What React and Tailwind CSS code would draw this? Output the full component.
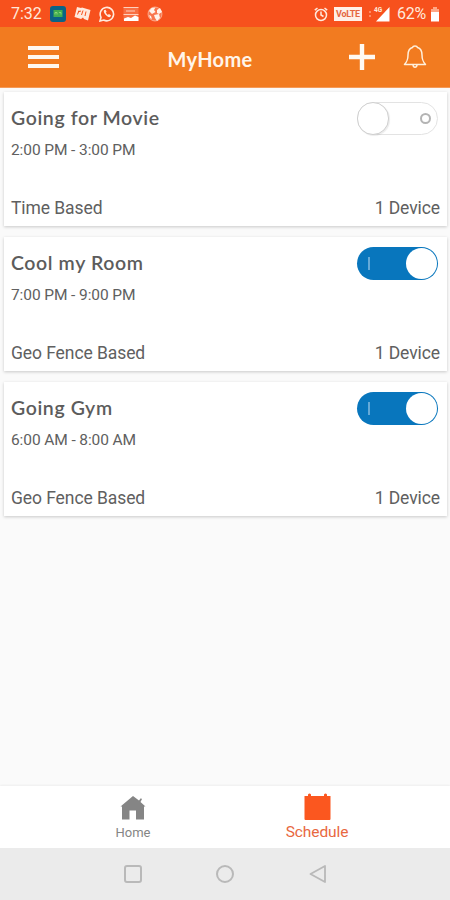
import React from "react";

const schedules = [
  { title: "Going for Movie", time: "2:00 PM - 3:00 PM", type: "Time Based", devices: "1 Device", on: false },
  { title: "Cool my Room", time: "7:00 PM - 9:00 PM", type: "Geo Fence Based", devices: "1 Device", on: true },
  { title: "Going Gym", time: "6:00 AM - 8:00 AM", type: "Geo Fence Based", devices: "1 Device", on: true },
];

export default function App() {
  return (
    <div className="w-[450px] h-[900px] flex flex-col overflow-hidden bg-[#fafafa] font-['Roboto',sans-serif] text-[#606060]">
      <StatusBar />
      <Header />

      {/* Schedule list */}
      <main className="flex-1 flex flex-col gap-[11px] pt-[4px] pl-1 pr-[3px]">
        {schedules.map((item) => (
          <ScheduleCard key={item.title} {...item} />
        ))}
      </main>

      <TabBar />
      <SystemNav />
    </div>
  );
}

// ——————————————————————————
// Android status bar
// ——————————————————————————
function StatusBar() {
  return (
    <div className="h-[27px] shrink-0 flex items-center pl-[11px] pr-[10px] pt-px bg-[#f7511d] text-[#ffe9dc]">
      <span className="w-[39px] text-[16px] leading-none">7:32</span>
      <div className="flex gap-2">
        <svg className="w-4 h-4" viewBox="0 0 16 16">
          <rect width="16" height="16" rx="3" fill="#0c6385" />
          <rect x="3.5" y="4" width="9" height="7" fill="#43ad50" />
          <path d="M5 8.500V6.500h2v2M9 6.500h2v2" fill="none" stroke="#9be07c" strokeWidth=".8" />
        </svg>
        <svg className="w-[17px] h-4" viewBox="0 0 17 16">
          <path d="m3 1 4 1 1-.5 8.500 2.500L14 14.500l-4-1.500-1-1.500-2 1.500L.500 11z" fill="#ffe9dc" />
          <path d="m5 4.500-1.500 4M9 4.500 7.500 9M12 5.500 11 10M4 6l3-1" fill="none" stroke="#f7511d" strokeWidth="1" />
        </svg>
        <svg className="w-4 h-4" viewBox="0 0 16 16" fill="none" stroke="#ffe9dc" strokeWidth="1.600">
          <path d="m1 15 1-3.700A6.700 6.700 0 1 1 4.700 14z" />
          <path d="M5.200 4c-2 2 3.300 8.200 6 7l.8-1.800-2.100-1.100-1.100.9-2-2.200.8-1.100-1-2z" fill="#ffe9dc" stroke="none" />
        </svg>
        <svg className="w-4 h-4" viewBox="0 0 16 16">
          <rect x=".5" y="1" width="15" height="14" rx="1" fill="#ffe9dc" fillOpacity=".2" />
          <path d="M.5 1.500h15M.5 8.500h15M3 5h9" stroke="#ffe9dc" strokeOpacity=".8" strokeWidth="1.200" />
          <path d="M1 15v-2.500l4-1.500 3 1L12 9.500l3.500 1.500V15z" fill="#fff" />
        </svg>
        <svg className="w-4 h-4" viewBox="0 0 16 16">
          <circle cx="8" cy="8" r="7" fill="#ffe9dc" fillOpacity=".25" stroke="#ffe9dc" strokeOpacity=".5" />
          <path d="m2 5 2.500-3 4-.5L7 4l1.500 2L5 8zM10 4l3-2 2 4-3 2-2-1zM7 9l5-1 1 4-3 3-2-3zM2 9l2 1 1 3-2-1z" fill="#fff3ea" />
        </svg>
      </div>

      <div className="ml-auto flex items-center">
        <svg className="w-[14px] h-[15px]" viewBox="0 0 14 15" fill="none" stroke="#ffe9dc" strokeWidth="1.500">
          <circle cx="7" cy="8" r="5.500" />
          <path d="M7 4.500V8l2.500 1.500M.8 3.200 3.500 1M13.200 3.200 10.500 1" />
        </svg>
        <span className="ml-[6px] mr-px w-[28px] h-[14px] bg-[#fff0e8] text-[#e5673f] text-[9px] leading-[14px] font-bold text-center tracking-[-0.3px]">
          VoLTE
        </span>
        <svg className="ml-[5px] mr-px w-[22px] h-[16px]" viewBox="0 0 22 16">
          <path d="M21.500 1v14.500H8z" fill="#fff" />
          <path d="M2 5v2m0 2v2" stroke="#ff8a63" strokeWidth="2" />
          <text x="6" y="6" fontSize="6.500" fontWeight="700" fill="#ffe9dc">4G</text>
        </svg>
        <span className="ml-[6px] w-[31px] text-[16px] leading-none tracking-[-0.3px]">62%</span>
        <svg className="ml-[2px] w-[10px] h-[15px]" viewBox="0 0 10 15">
          <path d="M3 0h4v2h2v4H1V2h2z" fill="#ffa685" />
          <path d="M1 5h8v9.500H1z" fill="#fff" />
        </svg>
      </div>
    </div>
  );
}

// ——————————————————————————
// App header
// ——————————————————————————
function Header() {
  return (
    <header className="h-[61px] shrink-0 grid grid-cols-[1fr_auto_1fr] items-center bg-[#f27b20] border-b border-[#f59a58] text-white">
      <div className="ml-7 flex flex-col gap-[5px]">
        <span className="w-[31px] h-1 bg-[#fff8ef]" />
        <span className="w-[31px] h-1 bg-[#fff8ef]" />
        <span className="w-[31px] h-1 bg-[#fff8ef]" />
      </div>
      <h1 className="ml-[-30px] pt-[4px] font-['Lato',sans-serif] font-bold text-[20px] leading-6 tracking-[0.3px] text-[#fff5ea]">
        MyHome
      </h1>
      <div className="flex items-center justify-end pr-[23px] gap-[28px]">
        <svg className="w-[26px] h-[26px]" viewBox="0 0 26 26" stroke="#fffaf3" strokeWidth="4.400">
          <path d="M13 0v26M0 13h26" />
        </svg>
        <svg className="w-6 h-6" viewBox="0 0 24 24" fill="none" stroke="#fff0dc" strokeWidth="1.500" strokeLinejoin="round">
          <path d="M9.500 2.500c.5-2 4.500-2 5 0 3.500 1 4.500 4 4.500 7.500 0 5 1 6.500 3.500 9.500h-21C4 16.500 5 15 5 10c0-3.500 1-6.500 4.500-7.500zM10 19.500c0 3.500 4 3.500 4 0" />
        </svg>
      </div>
    </header>
  );
}

// ——————————————————————————
// Schedule card
// ——————————————————————————
function ScheduleCard({ title, time, type, devices, on }) {
  return (
    <section className="h-[134px] pl-[7px] pr-[7px] flex flex-col bg-white shadow-[0_1px_3px_rgba(0,0,0,0.2)]">
      <div className="flex justify-between">
        <div className="pt-[14px]">
          <h2 className="font-['Lato',sans-serif] font-semibold text-[19.5px] leading-6 tracking-[0.6px] text-[#5c5c5c]">
            {title}
          </h2>
          <p className="mt-[10px] text-[15.5px] leading-5 tracking-[-0.1px]">{time}</p>
        </div>
        <Toggle on={on} />
      </div>
      <div className="mt-auto pb-[6px] flex justify-between text-[17.5px] leading-6 tracking-[-0.08px]">
        <span>{type}</span>
        <span>{devices}</span>
      </div>
    </section>
  );
}

function Toggle({ on }) {
  return on ? (
    <div className="mt-[10px] mr-[2px] w-[81px] h-[33px] rounded-full bg-[#0876bd] flex items-center justify-between pl-[11px] pr-px">
      <span className="w-[2px] h-[13px] bg-[#65aad8]" />
      <span className="w-[31px] h-[31px] rounded-full bg-white" />
    </div>
  ) : (
    <div className="mt-[10px] mr-[2px] w-[81px] h-[33px] rounded-full border border-[#e3e3e3] bg-white flex items-center justify-between pr-[6px]">
      <span className="-ml-px w-[32px] h-[33px] rounded-full border border-[#cfcfcf] bg-white shadow-[1px_1px_1px_rgba(0,0,0,0.08)]" />
      <span className="w-[11px] h-[11px] rounded-full border-2 border-[#b4b4b4]" />
    </div>
  );
}

// ——————————————————————————
// Bottom navigation
// ——————————————————————————
function TabBar() {
  return (
    <nav className="h-[62px] shrink-0 flex justify-center bg-white shadow-[0_-1px_2px_rgba(0,0,0,0.05)]">
      <div className="w-[184px] flex flex-col items-center pt-[9px] text-[#858585]">
        <svg className="w-[26px] h-[25px]" viewBox="0 0 26 25" fill="currentColor">
          <path d="M13 1 .5 11.500h1.500V24.500h7.500v-9h6.500v9h8v-13h1.500L20.500 7l1.500-3-1.200-.8L19 5.500z" />
        </svg>
        <span className="mt-[5px] text-[13px] leading-4">Home</span>
      </div>
      <div className="w-[184px] flex flex-col items-center pt-[7px] text-[#fb571f]">
        <svg className="w-[27px] h-[27px]" viewBox="0 0 27 27" fill="currentColor">
          <path d="M4 1.500q1.500-2 3 0V3h13V1.500q1.500-2 3 0V3h3.500v23a1 1 0 0 1-1 1h-24a1 1 0 0 1-1-1V3H4z" />
        </svg>
        <span className="mt-[3px] text-[15.5px] leading-[18px] tracking-[-0.1px] text-[#e8683f]">Schedule</span>
      </div>
    </nav>
  );
}

function SystemNav() {
  return (
    <div className="h-[52px] shrink-0 flex items-center justify-center gap-[74px] bg-[#ebebeb]">
      <span className="w-[18px] h-[18px] rounded-[3px] border-2 border-[#b9b9b9]" />
      <span className="w-[18px] h-[18px] rounded-full border-2 border-[#b9b9b9]" />
      <svg className="w-[18px] h-[18px]" viewBox="0 0 18 18" fill="none" stroke="#b9b9b9" strokeWidth="1.800" strokeLinejoin="round">
        <path d="M17 1v16L2.500 9z" />
      </svg>
    </div>
  );
}
